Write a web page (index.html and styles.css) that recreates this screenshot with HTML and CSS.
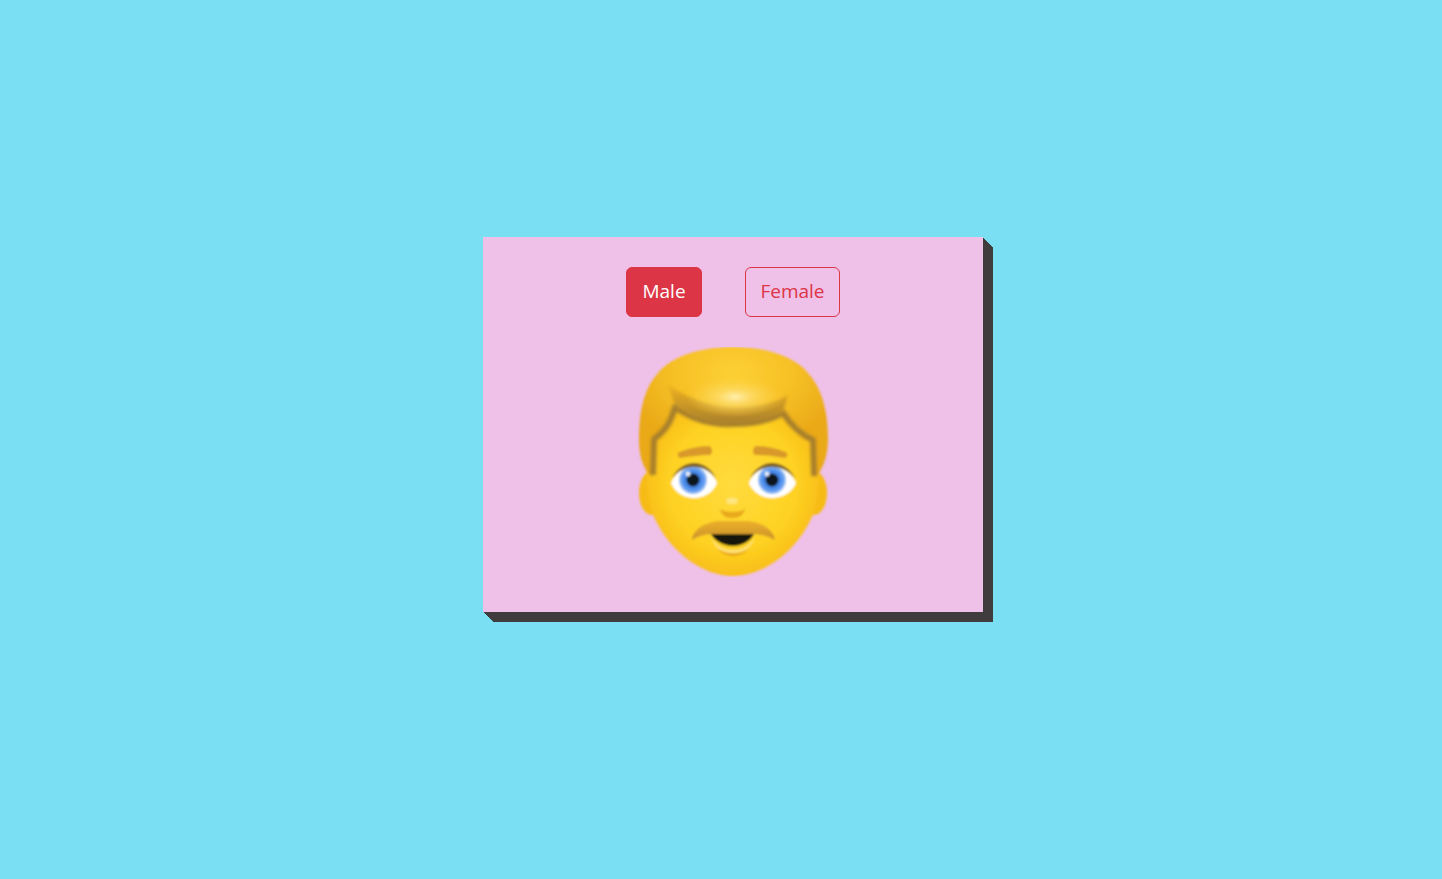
FILE: index.html
```html
<!DOCTYPE html>
<html lang="en">
<head>
    <meta charset="UTF-8">
    <meta name="viewport" content="width=device-width, initial-scale=1.0">
    <title>Gender Emoji</title>
    <link rel="stylesheet" href="styles.css">
</head>
<body>
    <div class="card">
        <div class="buttons">
            <button class="btn btn_solid" type="button">Male</button>
            <button class="btn btn_outline" type="button">Female</button>
        </div>
        <svg class="emoji" viewBox="0 0 200 230" role="img" aria-label="Man emoji">
            <defs>
                <radialGradient id="skin" cx="50%" cy="48%" r="60%">
                    <stop offset="0" stop-color="#ffdb3e"/>
                    <stop offset="0.6" stop-color="#fed222"/>
                    <stop offset="1" stop-color="#f6b414"/>
                </radialGradient>
                <radialGradient id="hair_back" cx="50%" cy="20%" r="58%">
                    <stop offset="0" stop-color="#fdd035"/>
                    <stop offset="0.55" stop-color="#f6c025"/>
                    <stop offset="1" stop-color="#eaa918"/>
                </radialGradient>
                <radialGradient id="hair_shine" cx="102" cy="50" r="50" gradientUnits="userSpaceOnUse" gradientTransform="translate(102 50) scale(1 0.42) translate(-102 -50)">
                    <stop offset="0" stop-color="#ffefb0"/>
                    <stop offset="0.35" stop-color="#fedc6a" stop-opacity="0.8"/>
                    <stop offset="1" stop-color="#fdd13c" stop-opacity="0"/>
                </radialGradient>
                <linearGradient id="band" x1="0" y1="0" x2="0" y2="1">
                    <stop offset="0" stop-color="#eeb120"/>
                    <stop offset="1" stop-color="#a9802c"/>
                </linearGradient>
                <radialGradient id="iris" cx="50%" cy="50%" r="50%">
                    <stop offset="0" stop-color="#2a62c8"/>
                    <stop offset="0.7" stop-color="#4f90ee"/>
                    <stop offset="1" stop-color="#97c0f5"/>
                </radialGradient>
                <linearGradient id="stache" x1="0" y1="0" x2="0" y2="1">
                    <stop offset="0" stop-color="#edb02a"/>
                    <stop offset="1" stop-color="#c9922c"/>
                </linearGradient>
                <filter id="soft" x="-5%" y="-5%" width="110%" height="110%">
                    <feGaussianBlur stdDeviation="0.8"/>
                </filter>
                <filter id="softer" x="-20%" y="-20%" width="140%" height="140%">
                    <feGaussianBlur stdDeviation="1.2"/>
                </filter>
            </defs>
            <g filter="url(#soft)">
                <!-- ears -->
                <ellipse cx="19" cy="146" rx="13" ry="22" fill="#f7bb15"/>
                <ellipse cx="181" cy="146" rx="13" ry="22" fill="#f7bb15"/>
                <!-- head -->
                <path d="M14 90 C12 130 14 158 23 174 C40 208 72 229 100 229 C128 229 160 208 177 174 C186 158 188 130 186 90 C180 40 20 40 14 90Z" fill="url(#skin)"/>
                <!-- hair back -->
                <path d="M100 0 C70 0 40 8 25 26 C12 40 6 62 6 92 C6 105 8 120 19 130 L23 92 L42 58 C60 72 80 77 100 76 C120 76 138 72 150 65 L179 92 L182 131 C192 120 195 105 195 92 C195 62 188 40 175 26 C160 8 130 0 100 0Z" fill="url(#hair_back)"/>
                <!-- shadow under the hair -->
                <path d="M20 128 L21 92 C30 86 38 76 42 60 C60 73 80 78 100 77 C120 77 138 73 150 66 C158 78 168 88 180 93 L181 129" fill="none" stroke="#a9802c" stroke-width="6" stroke-linejoin="round" filter="url(#softer)"/>
                <path d="M35 38 C58 53 80 60 103 60 C125 60 142 56 155 48 L150 65 C138 72 120 76 100 76 C80 77 60 72 42 58Z" fill="url(#band)" filter="url(#softer)"/>
                <!-- hair shine -->
                <ellipse cx="102" cy="49" rx="50" ry="20" fill="url(#hair_shine)"/>
                <!-- brows -->
                <path d="M45 106 C52 102 66 99 76 99 C80 100 80 108 76 108 C66 108 54 110 47 111 C45 110 44 108 45 106Z" fill="#d9992a"/>
                <path d="M154 106 C147 102 133 99 123 99 C119 100 119 108 123 108 C133 108 145 110 152 111 C154 110 155 108 154 106Z" fill="#d9992a"/>
                <!-- left eye -->
                <path d="M38 136 C42 126 52 119 61 119 C70 119 80 126 84 136 C80 146 70 151 61 151 C52 151 42 146 38 136Z" fill="#fff"/>
                <circle cx="60" cy="133" r="14" fill="url(#iris)"/>
                <circle cx="60" cy="133" r="6.5" fill="#10131c"/>
                <circle cx="55" cy="127" r="2.4" fill="#e6eefb"/>
                <path d="M39 131 C44 121 53 116 61 116 C69 116 78 121 83 131 C76 123 68 120 61 120 C54 120 46 123 39 131Z" fill="#7d6128"/>
                <!-- right eye -->
                <path d="M116 136 C120 126 130 119 139 119 C148 119 159 126 163 136 C159 146 148 151 139 151 C130 151 120 146 116 136Z" fill="#fff"/>
                <circle cx="139" cy="133" r="14" fill="url(#iris)"/>
                <circle cx="139" cy="133" r="6.5" fill="#10131c"/>
                <circle cx="134" cy="127" r="2.4" fill="#e6eefb"/>
                <path d="M117 131 C122 121 131 116 139 116 C147 116 157 121 162 131 C155 123 146 120 139 120 C132 120 124 123 117 131Z" fill="#7d6128"/>
                <!-- nose -->
                <ellipse cx="99" cy="154" rx="6" ry="3.2" fill="#ffe680"/>
                <path d="M87 162 C93 166 106 166 112 162 C110 170 104 171 99 171 C94 171 89 170 87 162Z" fill="#e8a91d"/>
                <!-- moustache -->
                <path d="M59 193 C60 181 76 173 90 174 C96 174 104 174 110 174 C124 173 141 181 142 193 C134 188 126 187 118 187 L82 187 C74 187 66 188 59 193Z" fill="url(#stache)"/>
                <!-- mouth -->
                <path d="M78 187 L121 187 C117 195 108 199 100 199 C92 199 82 195 78 187Z" fill="#15120c"/>
                <path d="M78 190 C84 200 92 203 100 203 C108 203 116 200 122 190 C118 203 108 206 100 206 C92 206 82 203 78 190Z" fill="#ffe27a"/>
                <path d="M85 202 C92 208 108 208 115 202 C110 211 90 211 85 202Z" fill="#e5a11b"/>
            </g>
        </svg>
    </div>
</body>
</html>
```

FILE: styles.css
```css
body {
    min-height: 100vh;
    margin: 0;
    background: #7adff2;
    font-family: 'Open Sans', 'Noto Sans', Arial, sans-serif;
    display: flex;
    justify-content: center;
    padding: 237px 0 0 24px;
    box-sizing: border-box;
}
.card {
    width: 500px;
    height: 375px;
    background: #efc0e8;
    display: flex;
    flex-direction: column;
    align-items: center;
    padding-top: 30px;
    box-sizing: border-box;
    box-shadow: 1px 1px #403b3d, 2px 2px #403b3d, 3px 3px #403b3d, 4px 4px #403b3d, 5px 5px #403b3d,
        6px 6px #403b3d, 7px 7px #403b3d, 8px 8px #403b3d, 9px 9px #403b3d, 10px 10px #403b3d;
}
.buttons {
    display: flex;
    gap: 43px;
    margin-bottom: 30px;
}
.btn {
    height: 50px;
    padding: 0 0 2px 0;
    border: 1px solid #dc3545;
    border-radius: 6px;
    font-family: inherit;
    font-size: 19px;
    cursor: pointer;
}
.btn_solid {
    width: 76px;
    background: #dc3545;
    color: #fff;
}
.btn_outline {
    width: 95px;
    background: transparent;
    color: #dc3545;
}
.emoji {
    display: block;
    width: 200px;
    height: 230px;
}
```
